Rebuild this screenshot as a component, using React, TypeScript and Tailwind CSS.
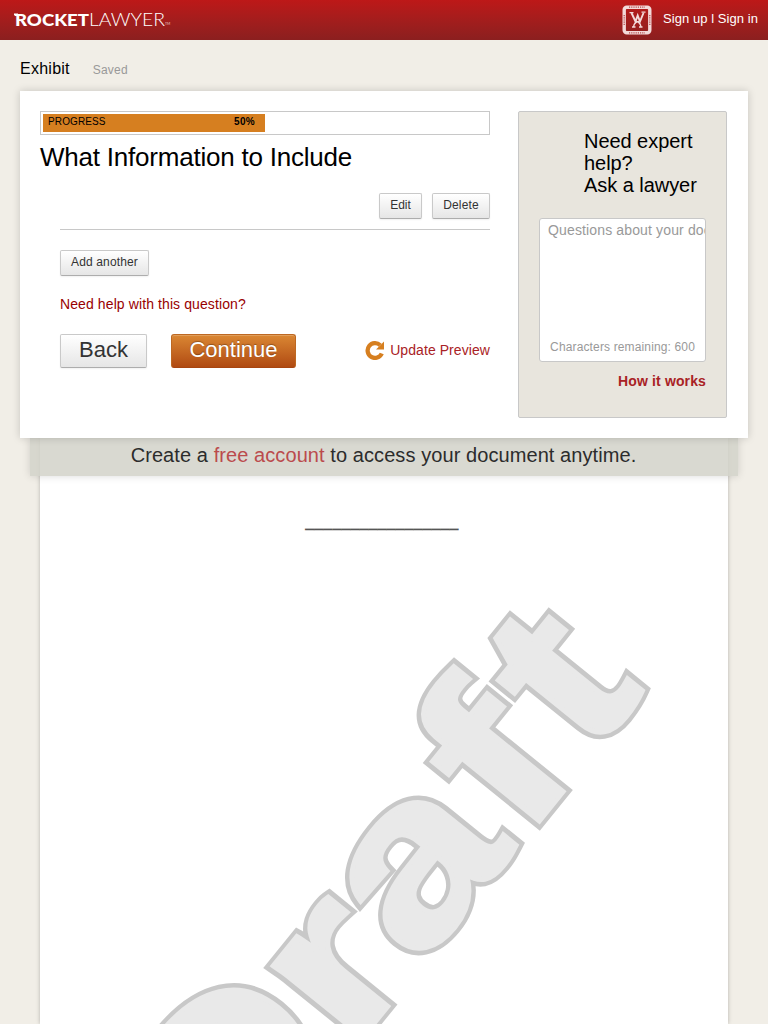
import type { ReactNode } from "react";

function SmallButton({ children, className }: { children: ReactNode; className: string }) {
  return (
    <button
      className={`h-[26px] rounded-[2px] border border-[#c9c9c9] border-b-[#adadad] bg-linear-to-b from-white to-[#e6e6e6] pb-[2px] text-[12px] leading-[22px] text-[#333] shadow-[0_1px_2px_rgba(0,0,0,0.06)] ${className}`}
    >
      {children}
    </button>
  );
}

function Seal() {
  return (
    <svg width="30" height="30" viewBox="0 0 30 30" fill="none" stroke="#f3d9d9">
      <rect x="2.200" y="2.200" width="25.600" height="25.600" rx="2.500" strokeWidth="3.400" />
      <path d="M7 2.200h16M7 27.800h16M2.200 10v10M27.800 10v10" stroke="#b5484a" strokeWidth="1.200" strokeDasharray="1.2 1" />
      <path d="M7.500 7.700h4M19.500 7.200h4" strokeWidth="1.300" />
      <path d="M9.500 8l4 8.500 2.200-6 2.300 6L21.500 8" strokeWidth="1.900" />
      <path d="M17 16.500c-3 0-5 2-5.500 5.500M13.500 16.500c3 0 5 2 5.500 5.500" strokeWidth="1.400" />
      <path d="M10 22h3.500M17 22h3.500" strokeWidth="1.500" />
    </svg>
  );
}

const watermarkGlyphs = [
  { glyph: "D", x: -786, y: 929, sx: 1.2, sy: 1.03 },
  { glyph: "r", x: -597, y: 935, sx: 1.3, sy: 1 },
  { glyph: "a", x: -488, y: 935, sx: 1.27, sy: 1.05 },
  { glyph: "f", x: -324, y: 936, sx: 1.25, sy: 1.05 },
  { glyph: "t", x: -218, y: 936, sx: 1.22, sy: 1.05 },
];

function Watermark() {
  return (
    <svg className="absolute top-0 left-0" width="688" height="586" viewBox="40 438 688 586" aria-hidden="true">
      <defs>
        <g id="draft" transform="rotate(-51)" fontSize="218" fontWeight="700" strokeLinejoin="miter" strokeMiterlimit="2.500">
          {watermarkGlyphs.map(({ glyph, x, y, sx, sy }) => (
            <text key={glyph} vectorEffect="non-scaling-stroke" transform={`translate(${x} ${y}) scale(${sx} ${sy})`}>
              {glyph}
            </text>
          ))}
        </g>
      </defs>
      <use href="#draft" fill="#c8c8c8" stroke="#c8c8c8" strokeWidth="14" />
      <use href="#draft" fill="#e9e9e9" stroke="#e9e9e9" strokeWidth="5" />
    </svg>
  );
}

export default function App() {
  return (
    <div className="flex h-[1024px] w-[768px] flex-col overflow-hidden bg-[#f1eee7] font-['Liberation_Sans',Arial,sans-serif] text-black">
      <header className="flex h-10 shrink-0 items-center justify-between bg-linear-to-b from-[#bd1818] to-[#8b1f1f] pr-[10px] pl-[14px] text-white">
        <svg width="160" height="20" viewBox="0 0 160 20" fill="#fff" fontFamily="Lato, sans-serif">
          <path d="M-1 3.500h5v2.500h-3z" />
          <text x="1" y="15.500" fontSize="16.500" fontWeight="900" textLength="74" lengthAdjust="spacingAndGlyphs">ROCKET</text>
          <text x="75" y="15.500" fontSize="17" fontWeight="300" textLength="76" lengthAdjust="spacingAndGlyphs">LAWYER</text>
          <text x="151" y="15" fontSize="3.500" opacity="0.7">TM</text>
        </svg>
        <div className="flex items-center gap-[11px]">
          <Seal />
          <span className="pb-[2px] text-[13px] leading-4 tracking-[0.06px]">Sign up l Sign in</span>
        </div>
      </header>

      <div className="flex h-[51px] shrink-0 items-baseline gap-[23px] pt-[19px] pl-5">
        <h1 className="text-[16px] leading-5 tracking-[0.25px]">Exhibit</h1>
        <span className="text-[12px] tracking-[0.2px] text-[#999]">Saved</span>
      </div>

      <main className="relative z-20 mx-5 flex h-[347px] shrink-0 bg-white pt-5 pr-[21px] pl-5 shadow-[0_0_8px_rgba(0,0,0,0.18)]">
        <section className="w-[450px]">
          <div className="h-6 border border-[#c8c8c8] p-[2px]">
            <div className="flex h-[18px] w-[222px] justify-between bg-[#d67f20] pr-[10px] pl-[5px] text-[10px] leading-[16px]">
              <span className="tracking-[0.12px]">PROGRESS</span>
              <b className="tracking-[0.3px]">50%</b>
            </div>
          </div>
          <h2 className="mt-[6px] mb-[20px] text-[26px] leading-8 tracking-[-0.22px]">What Information to Include</h2>
          <div className="pl-5">
            <div className="flex justify-end gap-[10px] border-b border-[#c8c8c8] pb-[10px]">
              <SmallButton className="w-[43px]">Edit</SmallButton>
              <SmallButton className="w-[58px] tracking-[0.15px]">Delete</SmallButton>
            </div>
            <SmallButton className="mt-5 block w-[89px] tracking-[0.14px]">Add another</SmallButton>
            <a className="mt-[20px] block text-[14px] leading-4 tracking-[0.1px] text-[#990000]">Need help with this question?</a>
            <div className="mt-[22px] flex items-center">
              <button className="h-[34px] w-[87px] rounded-[2px] border border-[#c9c9c9] border-b-[#adadad] bg-linear-to-b from-white to-[#e6e6e6] pb-[3px] text-[22px] leading-[29px] text-[#333] shadow-[0_1px_2px_rgba(0,0,0,0.06)]">
                Back
              </button>
              <button className="ml-6 h-[34px] w-[125px] rounded-[3px] border border-[#bd6822] border-b-[#a84510] bg-linear-to-b from-[#da8733] to-[#b04a12] pb-[3px] text-[22px] leading-[29px] text-white shadow-[inset_0_1px_0_rgba(255,255,255,0.2)] [text-shadow:0_-1px_1px_rgba(0,0,0,0.3)]">
                Continue
              </button>
              <a className="ml-auto flex items-center gap-[5px] pb-[2px] text-[14px] leading-4 tracking-[0.07px] text-[#a92225]">
                <svg width="20" height="20" viewBox="0 0 20 20" fill="none">
                  <path d="M15.200 5.200A7.400 7.400 0 1 0 16.800 13.500" stroke="#d67f20" strokeWidth="4.300" />
                  <path d="M19 1.500v8h-8z" fill="#d67f20" />
                </svg>
                Update Preview
              </a>
            </div>
          </div>
        </section>

        <aside className="ml-7 h-[307px] w-[209px] rounded-[2px] border border-[#c8c8c8] bg-[#e8e5dd] px-5">
          <h3 className="mt-[18px] mb-[22px] ml-[45px] w-[125px] text-[20px] leading-[22px] tracking-[-0.05px]">
            Need expert help?
            <br />
            Ask a lawyer
          </h3>
          <div className="flex h-[144px] w-[167px] flex-col justify-between overflow-hidden rounded-[3px] border border-[#c8c8c8] bg-white text-[#999]">
            <span className="pt-[3px] pl-2 text-[14px] leading-4 tracking-[0.14px] whitespace-nowrap">Questions about your document?</span>
            <span className="pr-[10px] pb-[6px] text-right text-[12px] leading-4 tracking-[0.14px]">Characters remaining: 600</span>
          </div>
          <a className="mt-[11px] block w-[167px] text-right text-[14px] leading-4 font-bold tracking-[0.13px] text-[#a92225]">How it works</a>
        </aside>
      </main>

      <div className="relative z-10 mx-[30px] h-[38px] shrink-0 bg-[#d2d2c9]/85 pr-[1px] text-center text-[20px] leading-[35px] tracking-[0.08px] text-[#2c2c2c] shadow-[0_0_8px_rgba(0,0,0,0.15)]">
        Create a <a className="text-[#bb4b4d]">free account</a> to access your document anytime.
      </div>

      <article className="relative mx-10 mt-[-38px] flex h-[586px] shrink-0 justify-center overflow-hidden bg-white pt-[74px] pr-1 shadow-[0_0_4px_rgba(0,0,0,0.25)]">
        <Watermark />
        <span className="relative text-[16px] leading-5 tracking-[0.12px] text-[#555] [text-shadow:0_-1px_0_#bbb]">_________________</span>
      </article>
    </div>
  );
}
